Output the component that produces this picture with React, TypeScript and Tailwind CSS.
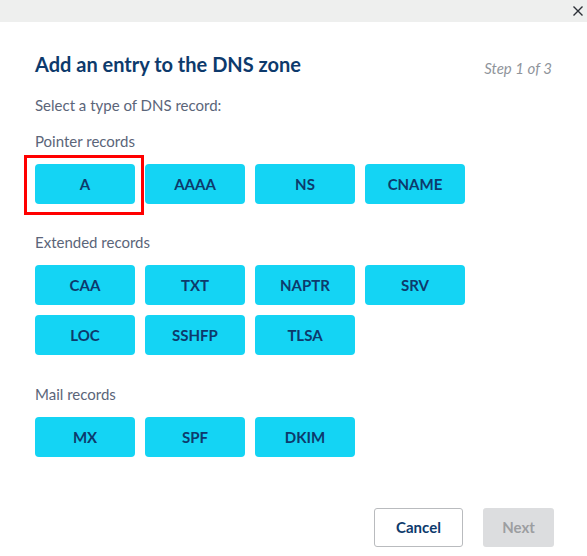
import React from 'react';

const groups = [
  { label: 'Pointer records', items: ['A', 'AAAA', 'NS', 'CNAME'] },
  { label: 'Extended records', items: ['CAA', 'TXT', 'NAPTR', 'SRV', 'LOC', 'SSHFP', 'TLSA'] },
  { label: 'Mail records', items: ['MX', 'SPF', 'DKIM'] },
];

export default function App() {
  return (
    <div className="relative h-[556px] w-[587px] overflow-hidden bg-white font-['Lato',sans-serif]">
      <div className="flex h-[22px] items-center justify-end bg-[#eeefee] pr-[3px]">
        <svg width="12" height="12" viewBox="0 0 12 12" className="text-[#2b2f36]">
          <path d="M1.5 1.5 L10.5 10.5 M10.5 1.5 L1.5 10.5" stroke="currentColor" strokeWidth="1.4" />
        </svg>
      </div>

      <div className="px-[35px] pt-[28px]">
        <div className="flex items-baseline justify-between">
          <h1 className="text-[20px] font-bold leading-[28px] text-[#0d3a6c]">Add an entry to the DNS zone</h1>
          <span className="relative top-[2px] text-[15px] italic text-[#8f949b]">Step 1 of 3</span>
        </div>
        <p className="mt-[17px] text-[15px] leading-[20px] text-[#5b6579]">Select a type of DNS record:</p>

        {groups.map((group, gi) => (
          <div key={group.label} className={gi === 0 ? 'mt-[16px]' : gi === 1 ? 'mt-[28px]' : 'mt-[29px]'}>
            <p className="text-[15px] leading-[20px] text-[#5b6579]">{group.label}</p>
            <div className="mt-[13px] grid w-[430px] grid-cols-4 gap-[10px]">
              {group.items.map((item) => (
                <div key={item} className="relative">
                  <button className="flex h-[40px] w-[100px] items-center justify-center rounded-[4px] bg-[#14d4f4] text-[15px] font-bold text-[#0d3a6c]">
                    {item}
                  </button>
                  {item === 'A' && (
                    <div className="pointer-events-none absolute left-[-11px] top-[-9px] h-[60px] w-[120px] border-[3px] border-[#ff0000]" />
                  )}
                </div>
              ))}
            </div>
          </div>
        ))}
      </div>

      <div className="absolute bottom-[9px] right-[33px] flex gap-[20px]">
        <button className="h-[39px] w-[89px] rounded-[3px] border border-[#b9bbbe] bg-white text-[15px] font-bold text-[#0d3a6c]">
          Cancel
        </button>
        <button className="h-[39px] w-[71px] rounded-[3px] bg-[#dcdddf] text-[15px] font-bold text-[#9c9ea1]">
          Next
        </button>
      </div>
    </div>
  );
}
